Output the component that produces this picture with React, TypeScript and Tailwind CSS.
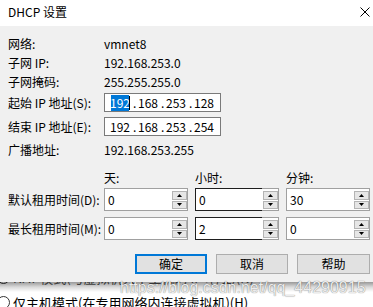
import React from "react";

function Tri({ up }: { up?: boolean }) {
  return (
    <svg width="5" height="3" viewBox="0 0 5 3" className="block">
      {up ? <polygon points="0,3 2.5,0 5,3" fill="#000" /> : <polygon points="0,0 5,0 2.5,3" fill="#000" />}
    </svg>
  );
}

function Spin({ value, dark }: { value: string; dark?: boolean }) {
  return (
    <div className="flex h-[23px] w-[84px]">
      <div
        className={
          dark
            ? "flex flex-1 items-center border border-r-0 border-[#1e1e1e] bg-white pl-[3px] leading-none"
            : "flex flex-1 items-center border border-r-0 border-[#a0a0a0] bg-white pl-[3px] leading-none"
        }
      >
        {value}
      </div>
      <div className="flex w-[17px] flex-col gap-[1px] border border-l-0 border-[#a0a0a0] bg-white pt-[2px] pb-[1px] pl-[1px]">
        <div className="flex flex-1 items-center justify-center border border-[#b4b4b4] bg-[#e6e6e6]">
          <Tri up />
        </div>
        <div className="flex flex-1 items-center justify-center border border-[#b4b4b4] bg-[#e6e6e6]">
          <Tri />
        </div>
      </div>
    </div>
  );
}

function IpBox({ parts, selectFirst }: { parts: string[]; selectFirst?: boolean }) {
  return (
    <div className="flex h-[19px] w-[117px] shrink-0 items-center border border-[#7a7a7a] bg-white pl-[6px] leading-none">
      {parts.map((p, i) => (
        <React.Fragment key={i}>
          {i === 0 && selectFirst ? (
            <span className="relative flex h-[16px] w-[18px] shrink-0 items-center justify-center bg-[#0078d7] text-white">
              {p}
              <span className="absolute right-[-1px] top-[1px] h-[14px] w-[1px] bg-black" />
            </span>
          ) : (
            <span className="flex w-[18px] shrink-0 justify-center">{p}</span>
          )}
          {i < parts.length - 1 && <span className="w-[10px] shrink-0 pl-[4px]">.</span>}
        </React.Fragment>
      ))}
    </div>
  );
}

export default function App() {
  return (
    <div className="relative h-[307px] w-[373px] overflow-hidden bg-white text-[12px] text-black font-['Noto_Sans_CJK_SC','Noto_Sans',sans-serif]">
      <div className="relative z-10 flex w-[373px] flex-col">
        <div className="flex h-[26px] items-center justify-between bg-white pb-[2px] pl-[8px] pr-[3px]">
          <span>DHCP 设置</span>
          <svg width="10" height="10" viewBox="0 0 10 10">
            <path d="M0.5 0.5 L9.5 9.5 M9.5 0.5 L0.5 9.5" stroke="#000" strokeWidth="1" />
          </svg>
        </div>
        <div className="flex flex-col bg-[#f0f0f0] pl-[8px] pt-[8px] pb-[8px] whitespace-nowrap">
          <div className="flex h-[19px] items-center">
            <span className="w-[96px]">网络:</span>
            <span>vmnet8</span>
          </div>
          <div className="flex h-[19px] items-center">
            <span className="w-[96px]">子网 IP:</span>
            <span>192.168.253.0</span>
          </div>
          <div className="flex h-[19px] items-center">
            <span className="w-[96px]">子网掩码:</span>
            <span>255.255.255.0</span>
          </div>
          <div className="mt-[2px] flex h-[19px] items-center">
            <span className="w-[96px]">起始 IP 地址(S):</span>
            <IpBox parts={["192", "168", "253", "128"]} selectFirst />
          </div>
          <div className="mt-[5px] flex h-[19px] items-center">
            <span className="w-[96px]">结束 IP 地址(E):</span>
            <IpBox parts={["192", "168", "253", "254"]} />
          </div>
          <div className="mt-[4px] flex h-[19px] items-center">
            <span className="w-[96px]">广播地址:</span>
            <span>192.168.253.255</span>
          </div>
          <div className="mt-[10px] flex h-[18px] items-center">
            <span className="w-[96px]" />
            <span className="w-[91px]">天:</span>
            <span className="w-[91px]">小时:</span>
            <span>分钟:</span>
          </div>
          <div className="mt-[1px] flex h-[23px] items-center">
            <span className="w-[96px] shrink-0">默认租用时间(D):</span>
            <div className="flex gap-[7px]">
              <Spin value="0" />
              <Spin value="0" dark />
              <Spin value="30" />
            </div>
          </div>
          <div className="mt-[6px] flex h-[23px] items-center">
            <span className="w-[96px] shrink-0">最长租用时间(M):</span>
            <div className="flex gap-[7px]">
              <Spin value="0" />
              <Spin value="2" dark />
              <Spin value="0" />
            </div>
          </div>
          <div className="mt-[14px] flex h-[20px] gap-[9px] pl-[127px]">
            <div className="flex h-[20px] w-[72px] items-center justify-center border-2 border-[#0078d7] bg-[#e1e1e1]">确定</div>
            <div className="flex h-[20px] w-[72px] items-center justify-center border border-[#adadad] bg-[#e1e1e1]">取消</div>
            <div className="flex h-[20px] w-[73px] items-center justify-center border border-[#adadad] bg-[#e1e1e1]">帮助</div>
          </div>
        </div>
      </div>
      <div className="relative h-[25px] bg-white text-[13px] whitespace-nowrap">
        <div className="-mt-[13px] flex h-[17px] items-center gap-[3px] text-[#555]">
          <span className="-ml-[3px] h-[13px] w-[13px] shrink-0 rounded-full border border-[#333] bg-white" />
          <span>NAT 模式(与虚拟机共享主机的 IP 地址)(N)</span>
        </div>
        <div className="mt-[8px] flex h-[17px] items-center gap-[3px]">
          <span className="-ml-[3px] h-[13px] w-[13px] shrink-0 rounded-full border border-[#333] bg-white" />
          <span>仅主机模式(在专用网络内连接虚拟机)(H)</span>
        </div>
      </div>
      <div className="absolute left-0 top-[282px] z-20 h-[10px] w-full bg-linear-to-b from-black/40 via-black/15 to-transparent" />
      <div className="absolute left-[120px] top-[278px] z-30 text-[16px] leading-[20px] text-[#ececec] font-['Liberation_Sans',sans-serif] [text-shadow:0_0_1px_rgba(0,0,0,0.6)]">
        https://blog.csdn.net/qq_44290915
      </div>
    </div>
  );
}
